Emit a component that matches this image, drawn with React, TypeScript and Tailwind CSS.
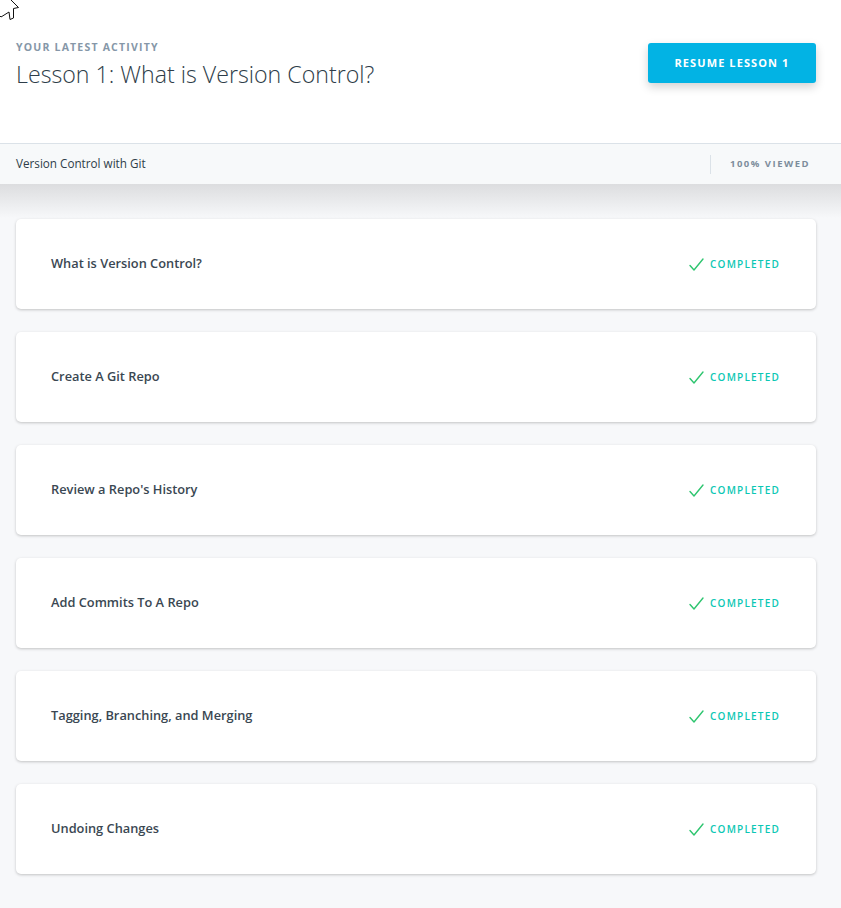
import React from "react";

const lessons = [
  "What is Version Control?",
  "Create A Git Repo",
  "Review a Repo's History",
  "Add Commits To A Repo",
  "Tagging, Branching, and Merging",
  "Undoing Changes",
];

function Check() {
  return (
    <svg width="15" height="13" viewBox="0 0 15 13" fill="none">
      <path d="M1 7.5 L5 12 L14 1" stroke="#2ec56f" strokeWidth="1.4" strokeLinecap="round" strokeLinejoin="round" />
    </svg>
  );
}

export default function App() {
  return (
    <div className="relative min-h-[908px] bg-[#f7f8fa] font-['Open_Sans',sans-serif]">
      <svg className="absolute left-0 top-0" width="20" height="22" viewBox="0 0 20 22">
        <path d="M10 -1 L18.5 7.5 L13.5 8.5 L13.5 18 L10 19.5 L9 12 L1 17 L0 16" fill="#fff" stroke="#111" strokeWidth="1" strokeLinejoin="miter" />
      </svg>
      <header className="flex h-[143px] items-start justify-between bg-white pl-4 pr-[25px] pt-[40px]">
        <div>
          <div className="text-[10.5px] font-bold uppercase leading-[14px] tracking-[1.2px] text-[#8697a8]">
            Your latest activity
          </div>
          <h1 className="mt-[4px] text-[23.2px] font-light leading-[32px] text-[#2e3d49]">
            Lesson 1: What is Version Control?
          </h1>
        </div>
        <button className="mt-[3px] h-10 w-[168px] rounded-[3px] bg-[#02b3e4] text-[11px] font-bold uppercase tracking-[1.1px] text-white shadow-[0_4px_10px_rgba(0,0,0,0.18)]">
          Resume Lesson 1
        </button>
      </header>
      <div className="flex h-[41px] items-center justify-between border-t border-[#dbe2e8] bg-[#f7f9fa] pl-4 pr-[31px]">
        <span className="text-[11.7px] text-[#2e3d49]">Version Control with Git</span>
        <div className="flex h-[19px] items-center border-l border-[#dbe2e8] pl-[19px]">
          <span className="text-[9.5px] font-bold uppercase tracking-[1.5px] text-[#7d8d9c]">100% viewed</span>
        </div>
      </div>
      <main className="flex flex-col gap-[23px] bg-[linear-gradient(to_bottom,#dcdddf,#f7f8fa_34px)] pb-[33px] pl-4 pr-[25px] pt-[35px]">
        {lessons.map((l) => (
          <div
            key={l}
            className="flex h-[90px] items-center justify-between rounded-[5px] bg-white pl-[35px] pr-[36px] shadow-[0_1px_3px_rgba(0,0,0,0.22)]"
          >
            <span className="text-[12.8px] font-semibold text-[#3a4752]">{l}</span>
            <div className="flex items-center gap-[6px]">
              <Check />
              <span className="text-[10px] font-semibold uppercase tracking-[1.2px] text-[#0cc7b4]">Completed</span>
            </div>
          </div>
        ))}
      </main>
    </div>
  );
}
